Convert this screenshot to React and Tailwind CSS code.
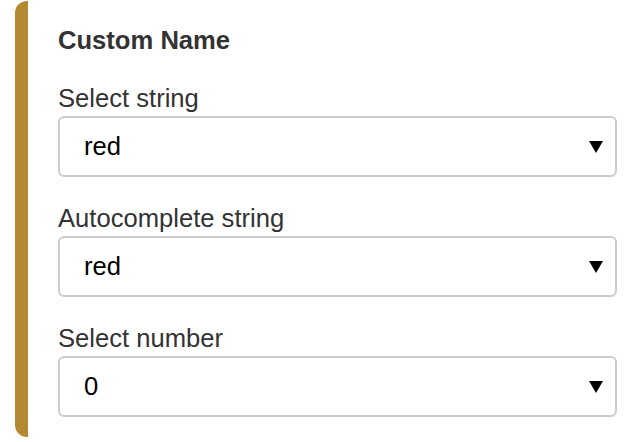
import React from 'react';

const Arrow = () => (
  <svg width="14" height="12" viewBox="0 0 14 12" className="shrink-0">
    <polygon points="0,0 14,0 7,12" fill="#000" />
  </svg>
);

const SelectField = ({ label, value }) => (
  <div className="mt-[27px] first:mt-0">
    <label className="block text-[25.6px] leading-[29px] text-[#333333] mb-[3px]">{label}</label>
    <div className="h-[61px] flex items-center justify-between pl-[24px] pr-[12px] border-2 border-[#cccccc] rounded-[6px] bg-white">
      <span className="text-[25.6px] text-black">{value}</span>
      <Arrow />
    </div>
  </div>
);

export default function App() {
  const fields = [
    { label: 'Select string', value: 'red' },
    { label: 'Autocomplete string', value: 'red' },
    { label: 'Select number', value: '0' },
  ];

  return (
    <div className="w-[634px] h-[442px] bg-white pl-[15px] pr-[17px] pt-[1px]" style={{ fontFamily: '"Liberation Sans", Arial, sans-serif' }}>
      <div className="border-l-[13px] border-[#b38a31] rounded-l-[12px] pl-[30px] pt-[25px] pb-[20px]">
        <h2 className="text-[25.6px] leading-[29px] font-bold text-[#333333] mb-[29px]">Custom Name</h2>
        <div>
          {fields.map((f) => (
            <SelectField key={f.label} label={f.label} value={f.value} />
          ))}
        </div>
      </div>
    </div>
  );
}
